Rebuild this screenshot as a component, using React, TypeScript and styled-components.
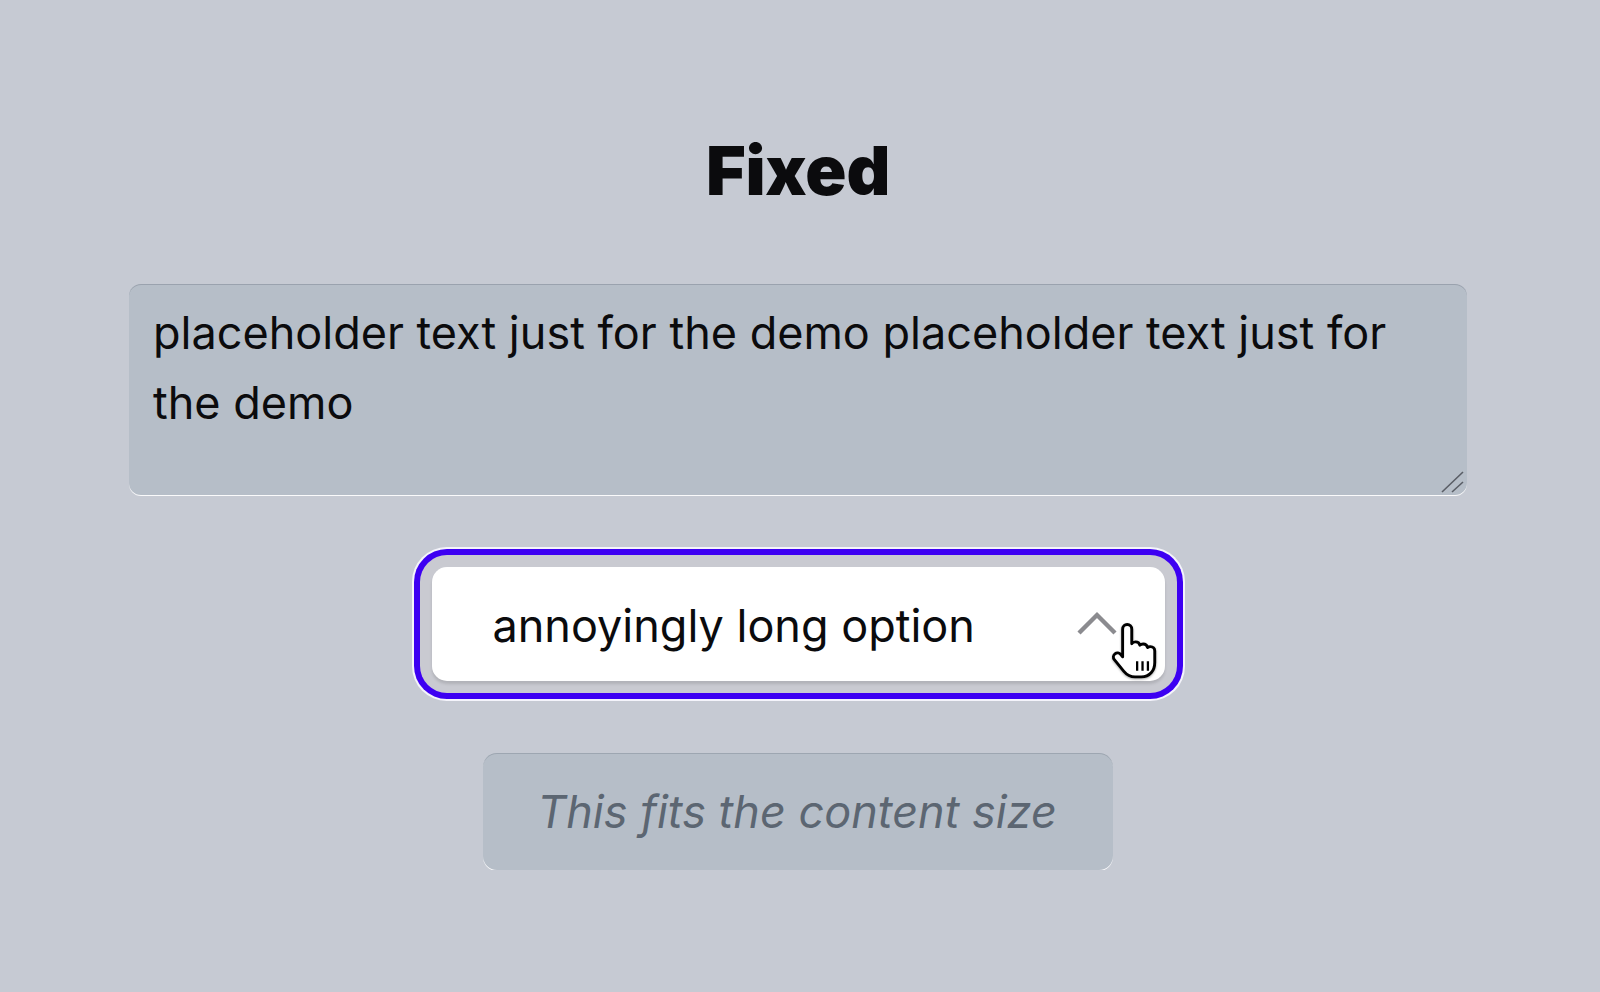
import styled, { createGlobalStyle } from "styled-components";

const GlobalStyle = createGlobalStyle`
  html, body {
    margin: 0;
    padding: 0;
    background: #c6cad3;
  }
  body {
    font-family: Inter, "Noto Sans", "Liberation Sans", sans-serif;
    color: #0b0b0d;
  }
`;

const Page = styled.main`
  width: 1338px;
  margin: 0 0 0 129px;
  padding-top: 136px;
  display: flex;
  flex-direction: column;
  align-items: center;
`;

const Title = styled.h1`
  margin: 0 0 80px;
  font-size: 68px;
  line-height: 68px;
  font-weight: 900;
  letter-spacing: -0.2px;
`;

const AreaWrap = styled.div`
  position: relative;
  align-self: stretch;
  margin-bottom: 72px;
`;

const Area = styled.textarea`
  display: block;
  box-sizing: border-box;
  width: 100%;
  height: 211px;
  margin: 0;
  padding: 14px 24px 13px;
  border: none;
  border-radius: 12px;
  background: #b6bec8;
  box-shadow: inset 0 1px 0 rgba(70, 80, 95, 0.25), 0 1px 0 rgba(255, 255, 255, 0.9);
  font-family: inherit;
  font-size: 45px;
  line-height: 70px;
  color: #0b0b0d;
  outline: none;
  resize: none;
`;

const Grip = styled.svg`
  position: absolute;
  right: 2px;
  bottom: 1px;
  width: 26px;
  height: 24px;
  pointer-events: none;
`;

const SelectWrap = styled.div`
  position: relative;
  margin-bottom: 72px;
`;

const SelectTrigger = styled.button`
  box-sizing: border-box;
  width: 733px;
  height: 114px;
  display: flex;
  align-items: center;
  justify-content: space-between;
  padding: 3px 47px 0 61px;
  border: none;
  border-radius: 15px;
  background: #ffffff;
  font-family: inherit;
  font-size: 45px;
  color: #0b0b0d;
  cursor: pointer;
  box-shadow:
    0 3px 3px rgba(0, 0, 0, 0.12),
    0 0 0 12px #c9cad1,
    0 0 0 18px #3d00f2,
    0 0 0 20px #f4f4fb;
`;

const Chevron = styled.svg`
  width: 42px;
  height: 24px;
  margin-top: -5px;
  color: #8b8b8f;
`;

const HandCursor = styled.svg`
  position: absolute;
  right: 3px;
  top: 55px;
  width: 58px;
  height: 58px;
  filter: drop-shadow(0 1px 1px rgba(0, 0, 0, 0.35));
  pointer-events: none;
`;

const FitBox = styled.div`
  box-sizing: border-box;
  width: fit-content;
  height: 117px;
  padding: 24px 56px 21px 54px;
  border-radius: 14px;
  background: #b6bec8;
  box-shadow: inset 0 1px 0 rgba(70, 80, 95, 0.22), 0 1px 0 rgba(255, 255, 255, 0.9);
  font-size: 45px;
  line-height: 70px;
  font-style: italic;
  color: #5c6672;
  white-space: nowrap;
`;

const App = () => {
  return (
    <>
      <GlobalStyle />
      <Page>
        <Title>Fixed</Title>
        <AreaWrap>
          <Area
            defaultValue="placeholder text just for the demo placeholder text just for the demo"
            spellCheck={false}
          />
          <Grip viewBox="0 0 26 24" fill="none">
            <path d="M3 22 L24 2 M13 22 L24 12" stroke="#5a5e66" strokeWidth="1.6" />
          </Grip>
        </AreaWrap>
        <SelectWrap>
          <SelectTrigger type="button">
            <span>annoyingly long option</span>
            <Chevron viewBox="0 0 42 24" fill="none">
              <path
                d="M3 22 L21 4 L39 22"
                stroke="currentColor"
                strokeWidth="4.4"
              />
            </Chevron>
          </SelectTrigger>
          <HandCursor viewBox="0 0 28 28">
            <path
              d="M9 3.5 C9 2.1 10 1.2 11.2 1.2 C12.4 1.2 13.4 2.1 13.4 3.5 L13.4 10.5 C13.8 9.9 14.5 9.6 15.2 9.6 C16.3 9.6 17.1 10.3 17.3 11.2 C17.7 10.8 18.3 10.6 18.9 10.6 C20 10.6 20.8 11.4 21 12.3 C21.4 12 21.9 11.9 22.4 11.9 C23.6 11.9 24.5 12.8 24.5 14 L24.5 19.5 C24.5 23.5 22 26.5 18 26.5 L15 26.5 C12.5 26.5 11 25.5 9.6 23.8 L5 18.2 C4.3 17.3 4.4 16.1 5.3 15.4 C6.2 14.7 7.4 14.9 8.1 15.7 L9 16.8 Z"
              fill="#ffffff"
              stroke="#000000"
              strokeWidth="1.4"
              strokeLinejoin="round"
            />
            <path
              d="M16 19 V23.5 M18.6 19 V23.5 M21.2 19 V23.5"
              stroke="#000000"
              strokeWidth="1.1"
            />
          </HandCursor>
        </SelectWrap>
        <FitBox>This fits the content size</FitBox>
      </Page>
    </>
  );
};

export default App;
